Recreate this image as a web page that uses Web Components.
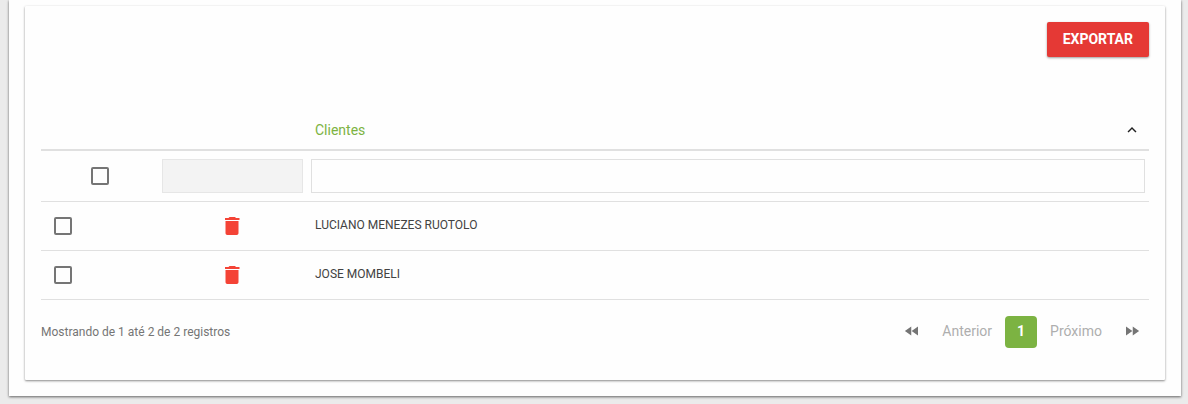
<!DOCTYPE html>
<html lang="pt-BR">
<head>
<meta charset="utf-8">
<meta name="viewport" content="width=device-width, initial-scale=1">
<title>Clientes</title>
<style>
  html { background: #ebebeb; }
  body { margin: 0; font: 12px/20px Roboto, sans-serif; color: #424242; }
</style>
</head>
<body>
<ui-page>
  <ui-card>
    <ui-toolbar><ui-button>EXPORTAR</ui-button></ui-toolbar>
    <clients-table heading="Clientes" rows='["LUCIANO MENEZES RUOTOLO","JOSE MOMBELI"]'></clients-table>
    <table-footer>
      <span>Mostrando de 1 até 2 de 2 registros</span>
      <table-pager slot="pager"></table-pager>
    </table-footer>
  </ui-card>
</ui-page>

<script>
const define = (name, html, setup) => {
  const template = document.createElement('template');
  template.innerHTML = html;
  customElements.define(name, class extends HTMLElement {
    constructor() {
      super();
      this.attachShadow({ mode: 'open' }).append(template.content.cloneNode(true));
    }
    connectedCallback() {
      if (setup && !this.ready) { this.ready = true; setup(this, this.shadowRoot); }
    }
  });
};

define('ui-page', `
  <style>
    :host { display: block; padding: 0 7px 8px 9px; overflow: hidden; }
    main { background: #fefefe; padding: 6px 16px 16px;
      box-shadow: 0 1px 3px rgba(0,0,0,.3), 0 1px 2px rgba(0,0,0,.34); }
  </style>
  <main><slot></slot></main>`);

define('ui-card', `
  <style>
    :host { display: block; background: #fefefe; padding: 16px 16px 32px; border-radius: 1px;
      box-shadow: 0 1px 3px rgba(0,0,0,.2), 0 1px 2px rgba(0,0,0,.3); }
  </style>
  <slot></slot>`);

define('ui-toolbar', `
  <style>:host { display: flex; justify-content: flex-end; padding-bottom: 52px; }</style>
  <slot></slot>`);

define('ui-button', `
  <style>
    :host { display: block; }
    button { display: block; border: 0; border-radius: 2px; padding: 8px 16px; background: #e53935;
      color: #fff; font: 700 14px/19px Roboto, sans-serif; cursor: pointer;
      box-shadow: 0 1px 3px rgba(0,0,0,.16), 0 1px 2px rgba(0,0,0,.24); }
  </style>
  <button type="button"><slot></slot></button>`);

define('ui-checkbox', `
  <style>
    :host { display: block; width: 18px; }
    input { appearance: none; display: block; box-sizing: border-box; width: 18px; height: 18px;
      margin: 0; border: 2px solid #757575; border-radius: 2px; cursor: pointer; }
    input:checked { background: #7cb342; border-color: #7cb342; }
  </style>
  <input type="checkbox">`,
  (host, root) => root.querySelector('input').setAttribute('aria-label', host.getAttribute('label')));

define('delete-button', `
  <style>
    :host { display: block; width: 24px; }
    button { display: block; border: 0; padding: 0; background: none; color: #f44336; cursor: pointer; }
    svg { display: block; width: 24px; height: 24px; fill: currentColor; }
  </style>
  <button type="button" aria-label="Excluir">
    <svg viewBox="0 0 24 24"><path d="M5.500 19c0 1.100.7 2 1.800 2h9.400c1.100 0 1.800-.9 1.800-2V7h-13v12zM19.500 4h-3.500l-1-1H9.500l-1 1H5v2h14.500V4z"/></svg>
  </button>`);

define('clients-table', `
  <style>
    :host { display: block; }
    table { width: 100%; table-layout: fixed; border-collapse: separate; border-spacing: 0; }
    .pick { width: 117px; }
    .action { width: 149px; }
    th, td { box-sizing: border-box; padding: 0 8px; text-align: left; vertical-align: middle; }
    th { height: 42px; padding-top: 2px; border-bottom: 2px solid #e0e0e0; font-weight: 400; }
    td { height: 49px; border-bottom: 1px solid #e0e0e0; }
    .sort { display: flex; justify-content: space-between; align-items: center; width: 100%;
      border: 0; padding: 0; background: none; color: #7cb342; font: 14px/20px Roboto, sans-serif; cursor: pointer; }
    .sort svg { width: 18px; height: 18px; fill: #212121; }
    .filter td { height: 51px; padding: 0 4px; }
    .filter input { display: block; box-sizing: border-box; width: 100%; height: 34px; padding: 0 8px;
      border: 1px solid #e0e0e0; border-radius: 0; background: transparent; font: inherit; color: inherit; }
    .filter input:disabled { background: #f3f3f3; border-color: #e6e6e6; }
    .filter ui-checkbox, delete-button { margin: 0 auto; }
    .row td:first-child { padding-left: 13px; }
    .row td:nth-child(2) { padding-right: 9px; }
    .row td:last-child { padding-bottom: 2px; }
  </style>
  <table>
    <colgroup><col class="pick"><col class="action"><col></colgroup>
    <thead><tr><th></th><th></th><th scope="col" aria-sort="ascending">
      <button class="sort" type="button"><span></span>
        <svg viewBox="0 0 24 24" aria-hidden="true"><path d="M12 8l-6 6 1.410 1.410L12 10.830l4.590 4.580L18 14z"/></svg>
      </button></th></tr></thead>
    <tbody>
      <tr class="filter">
        <td><ui-checkbox label="Selecionar todos"></ui-checkbox></td>
        <td><input type="text" disabled aria-label="Filtro indisponível"></td>
        <td><input type="text" aria-label="Filtrar clientes"></td>
      </tr>
    </tbody>
  </table>`,
  (host, root) => {
    root.querySelector('.sort span').textContent = host.getAttribute('heading');
    const body = root.querySelector('tbody');
    for (const name of JSON.parse(host.getAttribute('rows'))) {
      const row = body.insertRow();
      row.className = 'row';
      const box = document.createElement('ui-checkbox');
      box.setAttribute('label', 'Selecionar ' + name);
      row.insertCell().append(box);
      row.insertCell().append(document.createElement('delete-button'));
      row.insertCell().textContent = name;
    }
  });

define('table-footer', `
  <style>
    :host { display: flex; justify-content: space-between; align-items: center; padding-top: 16px; color: #757575; }
  </style>
  <slot></slot><slot name="pager"></slot>`);

define('table-pager', `
  <style>
    :host { display: block; }
    nav { display: flex; align-items: center; gap: 2px; }
    button { display: flex; align-items: center; justify-content: center; box-sizing: border-box;
      min-width: 32px; height: 32px; border: 0; border-radius: 4px; padding: 0 11px 2px;
      background: none; color: #aeaeae; font: 14px/20px Roboto, sans-serif; }
    .current { background: #7cb342; color: #fff; font-weight: 700; }
    .edge { padding: 0 0 2px; width: 34px; color: #757575; }
    svg { width: 18px; height: 18px; fill: currentColor; }
  </style>
  <nav aria-label="Paginação">
    <button class="edge" type="button" aria-label="Primeira página"><svg viewBox="0 0 24 24"><path d="M11 18V6l-8.500 6 8.500 6zm.5-6l8.500 6V6l-8.500 6z"/></svg></button>
    <button type="button">Anterior</button>
    <button class="current" type="button" aria-current="page">1</button>
    <button type="button">Próximo</button>
    <button class="edge" type="button" aria-label="Última página"><svg viewBox="0 0 24 24"><path d="M4 18l8.500-6L4 6v12zm9-12v12l8.500-6L13 6z"/></svg></button>
  </nav>`);
</script>
</body>
</html>
